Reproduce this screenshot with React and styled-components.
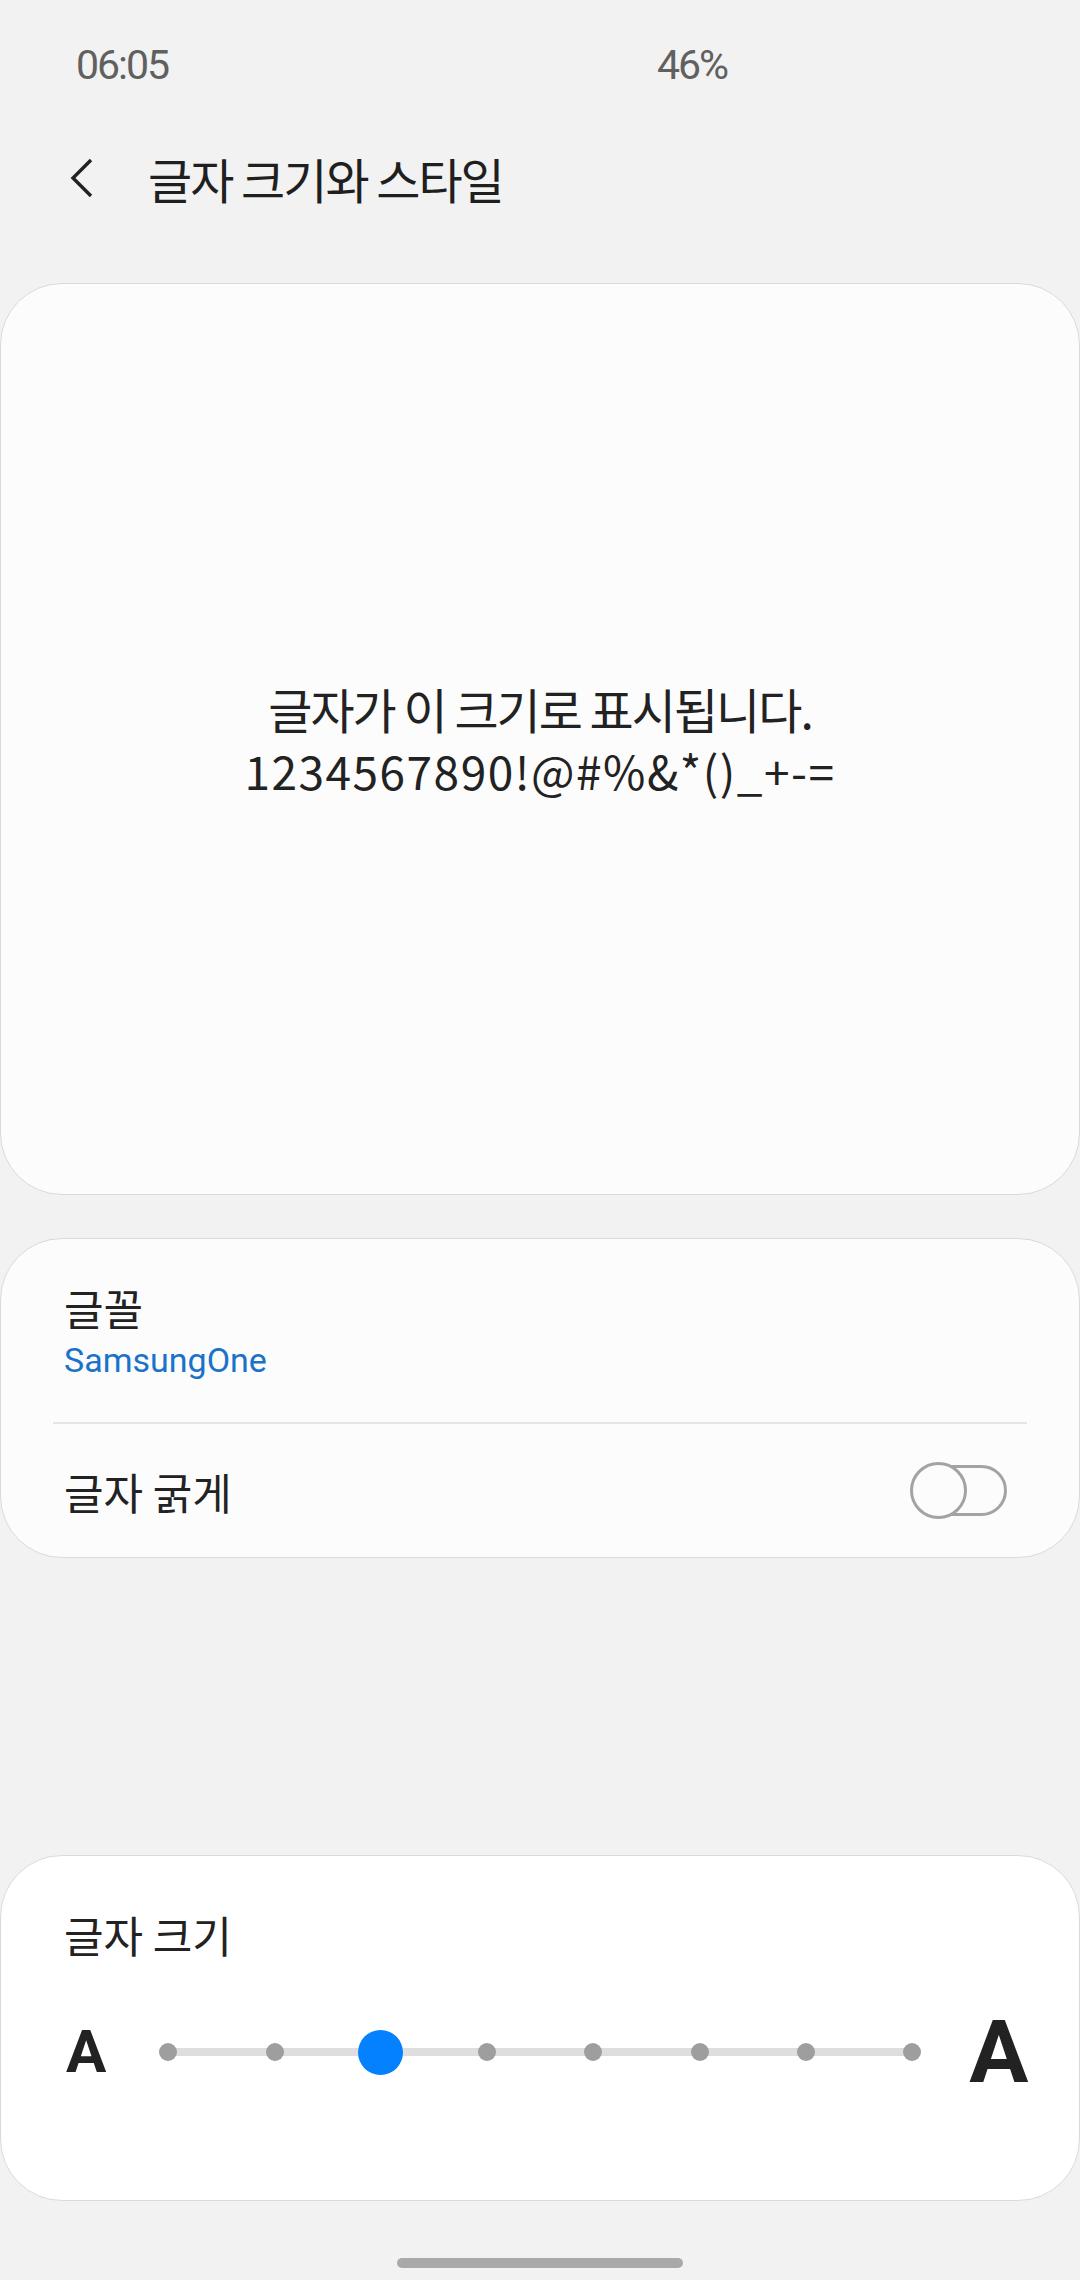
import React from 'react';
import styled, { createGlobalStyle } from 'styled-components';

const GlobalStyle = createGlobalStyle`
  html, body {
    margin: 0;
    padding: 0;
    background: #f2f2f2;
  }
  body {
    font-family: "Noto Sans CJK KR", "Noto Sans", sans-serif;
    color: #222222;
  }
`;

const Screen = styled.div`
  width: 1080px;
  height: 2280px;
  display: flex;
  flex-direction: column;
  background: #f2f2f2;
  overflow: hidden;
`;

const StatusBar = styled.div`
  height: 130px;
  display: flex;
  align-items: center;
  justify-content: space-between;
  padding: 0 353px 0 76px;
  font-family: Roboto, "Noto Sans", sans-serif;
  font-size: 41px;
  letter-spacing: -2px;
  color: #606060;
`;

const Header = styled.div`
  height: 96px;
  display: flex;
  align-items: center;
  padding-left: 69px;
  margin-bottom: 57px;
`;

const BackButton = styled.div`
  width: 25px;
  height: 40px;
  display: flex;
  margin-right: 54px;
`;

const Title = styled.h1`
  margin: 0;
  font-size: 48px;
  font-weight: 400;
  letter-spacing: -2px;
  line-height: 60px;
  color: #1f1f1f;
`;

const Card = styled.div`
  box-sizing: border-box;
  width: 1080px;
  height: ${(p) => p.$height}px;
  margin-bottom: ${(p) => p.$gap || 0}px;
  background: ${(p) => p.$bg || '#fcfcfc'};
  border: 1px solid #dadada;
  border-radius: 62px;
  display: flex;
  flex-direction: column;
`;

const Preview = styled.div`
  flex: 1;
  display: flex;
  flex-direction: column;
  align-items: center;
  justify-content: center;
  color: #222222;
`;

const PreviewLine = styled.div`
  font-size: ${(p) => p.$size}px;
  line-height: 62px;
  letter-spacing: ${(p) => p.$spacing}px;
`;

const FontRow = styled.div`
  height: 183px;
  box-sizing: border-box;
  padding: 41px 63px 0;
  display: flex;
  flex-direction: column;
`;

const Label = styled.div`
  font-size: 43px;
  line-height: 54px;
  color: #222222;
`;

const SubLabel = styled.div`
  margin-top: 4px;
  font-family: Roboto, "Noto Sans", sans-serif;
  font-size: 34px;
  line-height: 44px;
  color: #1b72c9;
`;

const Divider = styled.div`
  height: 2px;
  margin: 0 52px;
  background: #e4e4e4;
`;

const SwitchRow = styled.div`
  flex: 1;
  display: flex;
  align-items: center;
  justify-content: space-between;
  padding: 0 72px 0 63px;
`;

const Toggle = styled.div`
  position: relative;
  width: 97px;
  height: 57px;
`;

const ToggleTrack = styled.div`
  position: absolute;
  right: 0;
  top: 3px;
  box-sizing: border-box;
  width: 82px;
  height: 51px;
  border: 3px solid #a3a3a3;
  border-radius: 26px;
`;

const ToggleKnob = styled.div`
  position: absolute;
  left: 0;
  top: 0;
  box-sizing: border-box;
  width: 57px;
  height: 57px;
  border: 3px solid #a3a3a3;
  border-radius: 50%;
  background: #fcfcfc;
`;

const SizeTitle = styled(Label)`
  padding: 51px 0 0 63px;
`;

const SizeRow = styled.div`
  height: 90px;
  margin-top: 46px;
  display: flex;
  align-items: center;
  padding-left: 65px;
`;

const Glyph = styled.div`
  font-family: Roboto, "Noto Sans", sans-serif;
  font-weight: 700;
  font-size: ${(p) => p.$size}px;
  line-height: 1;
  color: #222222;
`;

const Slider = styled.div`
  position: relative;
  width: 762px;
  margin: 0 48px 0 53px;
  display: flex;
  justify-content: space-between;
  align-items: center;
  &::before {
    content: '';
    position: absolute;
    left: 9px;
    right: 9px;
    top: 50%;
    height: 8px;
    margin-top: -4px;
    background: #dedede;
  }
`;

const Stop = styled.div`
  position: relative;
  width: 18px;
  height: 18px;
  display: flex;
  align-items: center;
  justify-content: center;
`;

const Dot = styled.div`
  flex-shrink: 0;
  width: ${(p) => (p.$active ? 45 : 18)}px;
  height: ${(p) => (p.$active ? 45 : 18)}px;
  border-radius: 50%;
  background: ${(p) => (p.$active ? '#0381fe' : '#9e9e9e')};
`;

const HomeBar = styled.div`
  width: 286px;
  height: 10px;
  margin: 57px auto 0;
  border-radius: 5px;
  background: #a9a9a9;
`;

const stops = [0, 1, 2, 3, 4, 5, 6, 7];

export default function App() {
  return (
    <Screen>
      <GlobalStyle />
      <StatusBar>
        <span>06:05</span>
        <span>46%</span>
      </StatusBar>

      <Header>
        <BackButton>
          <svg width="25" height="40" viewBox="0 0 25 40">
            <path d="M22 2 L4 20 L22 38" fill="none" stroke="#222" strokeWidth="3.4" />
          </svg>
        </BackButton>
        <Title>글자 크기와 스타일</Title>
      </Header>

      <Card $height={912} $gap={43}>
        <Preview>
          <PreviewLine $size={48} $spacing={-2}>글자가 이 크기로 표시됩니다.</PreviewLine>
          <PreviewLine $size={46} $spacing={1.5}>1234567890!@#%&amp;*()_+-=</PreviewLine>
        </Preview>
      </Card>

      <Card $height={320} $gap={297}>
        <FontRow>
          <Label>글꼴</Label>
          <SubLabel>SamsungOne</SubLabel>
        </FontRow>
        <Divider />
        <SwitchRow>
          <Label>글자 굵게</Label>
          <Toggle>
            <ToggleTrack />
            <ToggleKnob />
          </Toggle>
        </SwitchRow>
      </Card>

      <Card $height={346} $bg="#ffffff">
        <SizeTitle>글자 크기</SizeTitle>
        <SizeRow>
          <Glyph $size={60}>A</Glyph>
          <Slider>
            {stops.map((i) => (
              <Stop key={i}>
                <Dot $active={i === 2} />
              </Stop>
            ))}
          </Slider>
          <Glyph $size={88}>A</Glyph>
        </SizeRow>
      </Card>

      <HomeBar />
    </Screen>
  );
}
